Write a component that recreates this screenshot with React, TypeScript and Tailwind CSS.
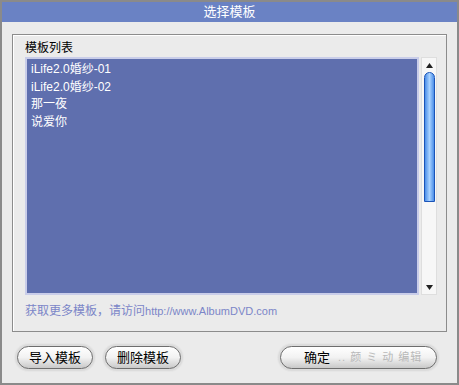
import React from "react";

const font = { fontFamily: '"Liberation Sans", "Noto Sans CJK SC", sans-serif' };

const items = ["iLife2.0婚纱-01", "iLife2.0婚纱-02", "那一夜", "说爱你"];

function PillButton({ label, className }: { label: string; className?: string }) {
  return (
    <div className={"rounded-full p-[2px] bg-[#dcdcdc] shadow-[0_0_0_1px_#e6e6e6] " + (className ?? "")}>
      <div className="h-[23px] rounded-full border border-[#6e6e6e] bg-gradient-to-b from-[#ffffff] via-[#f2f2f2] to-[#c9c9c9] flex items-center justify-center text-[13px] text-black whitespace-nowrap">
        {label}
      </div>
    </div>
  );
}

export default function App() {
  return (
    <div style={font} className="w-[459px] h-[385px] border-2 border-[#8a8a8a] bg-[#ebebeb] flex flex-col overflow-hidden">
      {/* Title bar */}
      <div className="h-[20px] bg-[#6a82c4] flex items-center justify-center text-white text-[13px]">选择模板</div>

      {/* Group box */}
      <div className="mt-[12px] ml-[10px] mr-[10px] h-[298px] border border-[#8c8c8c] shadow-[inset_1px_1px_0_#ffffff] flex flex-col pl-[12px] pr-[8px]">
        <div className="mt-[6px] h-[15px] leading-[15px] text-[12px] text-black">模板列表</div>
        <div className="mt-[1px] flex gap-[2px]">
          <div className="w-[394px] h-[238px] border-2 border-[#c9cde9] bg-[#5f6fae] pl-[4px] pt-[2px]">
            {items.map((t) => (
              <div key={t} className="h-[17.5px] leading-[17px] text-[12px] text-white">
                {t}
              </div>
            ))}
          </div>
          <div className="w-[16px] h-[238px] bg-[#f7f7f7] border border-[#dedede] flex flex-col items-center">
            <div className="h-[14px] flex items-center justify-center">
              <svg width="7" height="5" viewBox="0 0 7 5"><path d="M3.5 0L7 5H0z" fill="#222" /></svg>
            </div>
            <div className="w-[11px] h-[130px] rounded-t-full rounded-b-[3px] border border-[#1b54b8] bg-gradient-to-r from-[#4b8ee8] via-[#a9d2ff] to-[#4b8ee8]" />
            <div className="flex-1" />
            <div className="h-[14px] flex items-center justify-center">
              <svg width="7" height="5" viewBox="0 0 7 5"><path d="M0 0H7L3.5 5z" fill="#222" /></svg>
            </div>
          </div>
        </div>
        <div className="mt-[7px] text-[12px] text-[#7b86c8] whitespace-nowrap">
          获取更多模板，请访问<span className="text-[11px]">http://www.AlbumDVD.com</span>
        </div>
      </div>

      {/* Buttons */}
      <div className="mt-[12px] ml-[13px] mr-[18px] flex items-center">
        <PillButton label="导入模板" className="w-[80px]" />
        <PillButton label="删除模板" className="w-[80px] ml-[8px]" />
        <div className="flex-1" />
        <div className="w-[161px] rounded-full p-[2px] bg-[#dcdcdc] shadow-[0_0_0_1px_#e6e6e6]">
          <div className="h-[23px] rounded-full border border-[#6e6e6e] bg-gradient-to-b from-[#ffffff] via-[#f2f2f2] to-[#c9c9c9] flex items-center text-[13px] whitespace-nowrap overflow-hidden">
            <span className="ml-[23px] text-black">确定</span>
            <span className="ml-[8px] text-[11px] text-[#b8b8b8] tracking-[1px]">.. 颜 ミ 动 编辑</span>
          </div>
        </div>
      </div>
    </div>
  );
}
